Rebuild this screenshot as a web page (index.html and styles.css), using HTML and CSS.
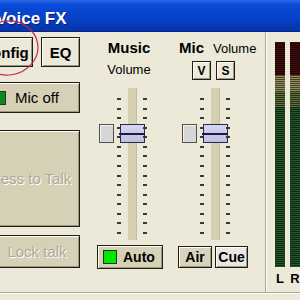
FILE: index.html
```html
<!DOCTYPE html>
<html lang="en">
<head>
  <meta charset="UTF-8">
  <meta name="viewport" content="width=device-width, initial-scale=1.0">
  <title>Voice FX</title>
  <link rel="stylesheet" href="styles.css">
</head>

<body>
  <div class="window">
    <header class="titlebar">Voice FX</header>

    <main class="panel">
      <!-- talk controls -->
      <div class="side">
        <div class="tabs">
          <button class="btn btn-bold btn-config">Config</button>
          <button class="btn btn-bold btn-eq">EQ</button>
        </div>
        <button class="btn btn-tan btn-mic"><span class="led led-dark"></span>Mic off</button>
        <button class="btn btn-tan btn-talk" disabled>Press to Talk</button>
        <button class="btn btn-tan btn-lock" disabled>Lock talk</button>
      </div>

      <!-- music channel -->
      <section class="channel channel-music">
        <h2 class="ch-title">Music</h2>
        <div class="ch-sub">Volume</div>
        <div class="fader-row">
          <span class="pan"></span>
          <div class="fader"><span class="thumb" style="top: 36px"></span></div>
        </div>
        <button class="btn btn-tan btn-bold btn-auto"><span class="led"></span>Auto</button>
      </section>

      <!-- mic channel -->
      <section class="channel channel-mic">
        <div class="mic-head">
          <h2 class="ch-title">Mic</h2>
          <span class="ch-sub">Volume</span>
        </div>
        <div class="keys">
          <button class="btn btn-bold btn-key">V</button>
          <button class="btn btn-bold btn-key">S</button>
        </div>
        <div class="fader-row">
          <span class="pan"></span>
          <div class="fader"><span class="thumb" style="top: 36px"></span></div>
        </div>
        <div class="routes">
          <button class="btn btn-bold btn-air">Air</button>
          <button class="btn btn-bold btn-cue">Cue</button>
        </div>
      </section>

      <!-- output meters -->
      <div class="meters">
        <div class="bar"></div>
        <div class="bar"></div>
        <span class="meter-label">L</span>
        <span class="meter-label">R</span>
      </div>
    </main>

    <footer class="statusbar"></footer>
  </div>

  <svg class="annotation" width="300" height="100" viewBox="0 0 300 100">
    <ellipse cx="8" cy="48" rx="30" ry="27" fill="none" stroke="#c8284a" stroke-width="1.2" transform="rotate(-8 8 48)"/>
  </svg>
</body>
</html>
```

FILE: styles.css
```css
* {
  margin: 0;
  padding: 0;
  box-sizing: border-box;
}

body {
  width: 300px;
  height: 300px;
  overflow: hidden;
  position: relative;
  background: #ece9d8;
  font-family: "Liberation Sans", Arial, sans-serif;
  color: #000;
}

.window {
  width: 330px;
  height: 300px;
  margin-left: -30px;
  display: flex;
  flex-direction: column;
}

.titlebar {
  height: 32px;
  padding: 9px 0 0 26px;
  line-height: 20px;
  font-size: 17px;
  font-weight: bold;
  color: #fff;
  text-shadow: 1px 1px 0 #0a1e78;
  background: linear-gradient(to bottom, #2a6ae8 0%, #0a4ad8 15%, #0642c8 60%, #0434a8 100%);
  border-bottom: 1px solid #0a2480;
}

.panel {
  display: flex;
  height: 260px;
  padding-left: 7px;
}

/* buttons */
.btn {
  display: flex;
  align-items: center;
  justify-content: center;
  font-family: inherit;
  font-size: 15px;
  line-height: 1;
  color: #000;
  background: #ece9d8;
  border: 1px solid #1e1e14;
  box-shadow: inset 1px 1px 0 #fffef8, inset -1px -1px 0 #9c987e;
}

.btn-bold {
  font-weight: bold;
}

.btn-tan {
  background: #d6d1b6;
}

.btn:disabled {
  color: #aca899;
  text-shadow: 1px 1px 0 #fff;
}

.led {
  width: 14px;
  height: 14px;
  border: 1px solid #1a3a1a;
  background: #00e800;
}

.led-dark {
  background: #0c8a1c;
}

/* left column */
.side {
  width: 103px;
  padding-top: 5px;
  display: flex;
  flex-direction: column;
}

.tabs {
  display: flex;
  gap: 8px;
  height: 30px;
}

.btn-config {
  width: 56px;
}

.btn-eq {
  width: 39px;
}

.btn-mic {
  margin-top: 15px;
  height: 31px;
  justify-content: flex-start;
  padding-left: 14px;
  gap: 9px;
}

.btn-talk {
  margin-top: 17px;
  height: 97px;
}

.btn-lock {
  margin-top: 8px;
  height: 33px;
  padding-left: 17px;
}

/* channels */
.channel {
  display: flex;
  flex-direction: column;
  padding-top: 7px;
}

.channel-music {
  width: 70px;
  margin-left: 15px;
  align-items: center;
}

.channel-mic {
  width: 79px;
  margin-left: 14px;
  align-items: flex-start;
}

.ch-title {
  font-size: 15px;
  line-height: 17px;
  font-weight: bold;
}

.ch-sub {
  font-size: 13px;
  line-height: 15px;
}

.channel-music .ch-sub {
  margin-top: 6px;
}

.mic-head {
  display: flex;
  align-items: baseline;
  gap: 9px;
  padding-left: 2px;
}

.keys {
  display: flex;
  gap: 5px;
  margin: 5px 0 0 15px;
}

.btn-key {
  width: 19px;
  height: 19px;
  font-size: 12px;
}

.fader-row {
  display: flex;
  gap: 3px;
  align-self: flex-start;
  margin: 11px 0 0 4px;
}

.channel-mic .fader-row {
  margin: 8px 0 0 5px;
}

.pan {
  width: 15px;
  height: 19px;
  margin-top: 36px;
  border: 1px solid #505050;
  background: #d6d6d6;
  box-shadow: inset 1px 1px 0 #f4f4f4;
}

.fader {
  position: relative;
  width: 30px;
  height: 152px;
  background: linear-gradient(to right, transparent 10px, #ebe7d0 10px 11px, #d6d0b0 11px 19px, #c4be9c 19px 20px, transparent 20px);
}

.fader::before,
.fader::after {
  content: "";
  position: absolute;
  top: 10px;
  width: 4px;
  height: 136px;
  background: repeating-linear-gradient(to bottom, #383838 0 2px, transparent 2px 9.57px);
}

.fader::before {
  left: 0;
}

.fader::after {
  right: 0;
}

.thumb {
  position: absolute;
  left: 3px;
  width: 25px;
  height: 19px;
  border: 1px solid #2a2a40;
  background: linear-gradient(#d6d6ee, #c0c0e0);
}

.thumb::after {
  content: "";
  position: absolute;
  left: -2px;
  right: -1px;
  top: 8px;
  height: 2px;
  background: #1a1a50;
}

.btn-auto {
  align-self: flex-start;
  width: 66px;
  height: 24px;
  margin: 5px 0 0 2px;
  font-size: 14px;
  justify-content: flex-start;
  padding-left: 5px;
  gap: 6px;
}

.routes {
  display: flex;
  gap: 3px;
  margin: 6px 0 0 1px;
}

.btn-air,
.btn-cue {
  height: 22px;
  font-size: 14px;
}

.btn-air {
  width: 34px;
  background: #d8d4bc;
}

.btn-cue {
  width: 33px;
  background: #e8e8e2;
}

/* meters */
.meters {
  margin-left: 9px;
  padding: 10px 0 0 9px;
  border-left: 1px solid #aca899;
  box-shadow: inset 1px 0 0 #fff;
  display: grid;
  grid-template-columns: 10px 10px;
  grid-template-rows: 225px auto;
  column-gap: 5px;
  align-content: start;
}

.bar {
  background:
    repeating-linear-gradient(to bottom, transparent 0 1px, rgba(0, 0, 0, .55) 1px 2px),
    linear-gradient(to bottom, #420c0c 0 33px, #948f5a 33px 50px, #5e6e3c 50px 65px, #22582a 65px);
}

.meter-label {
  margin-top: 4px;
  font-size: 13px;
  line-height: 15px;
  font-weight: bold;
  text-align: center;
}

.statusbar {
  height: 8px;
  border-top: 1px solid #aca899;
  box-shadow: inset 0 1px 0 #fff;
}

.annotation {
  position: absolute;
  left: 0;
  top: 0;
  pointer-events: none;
}
```
